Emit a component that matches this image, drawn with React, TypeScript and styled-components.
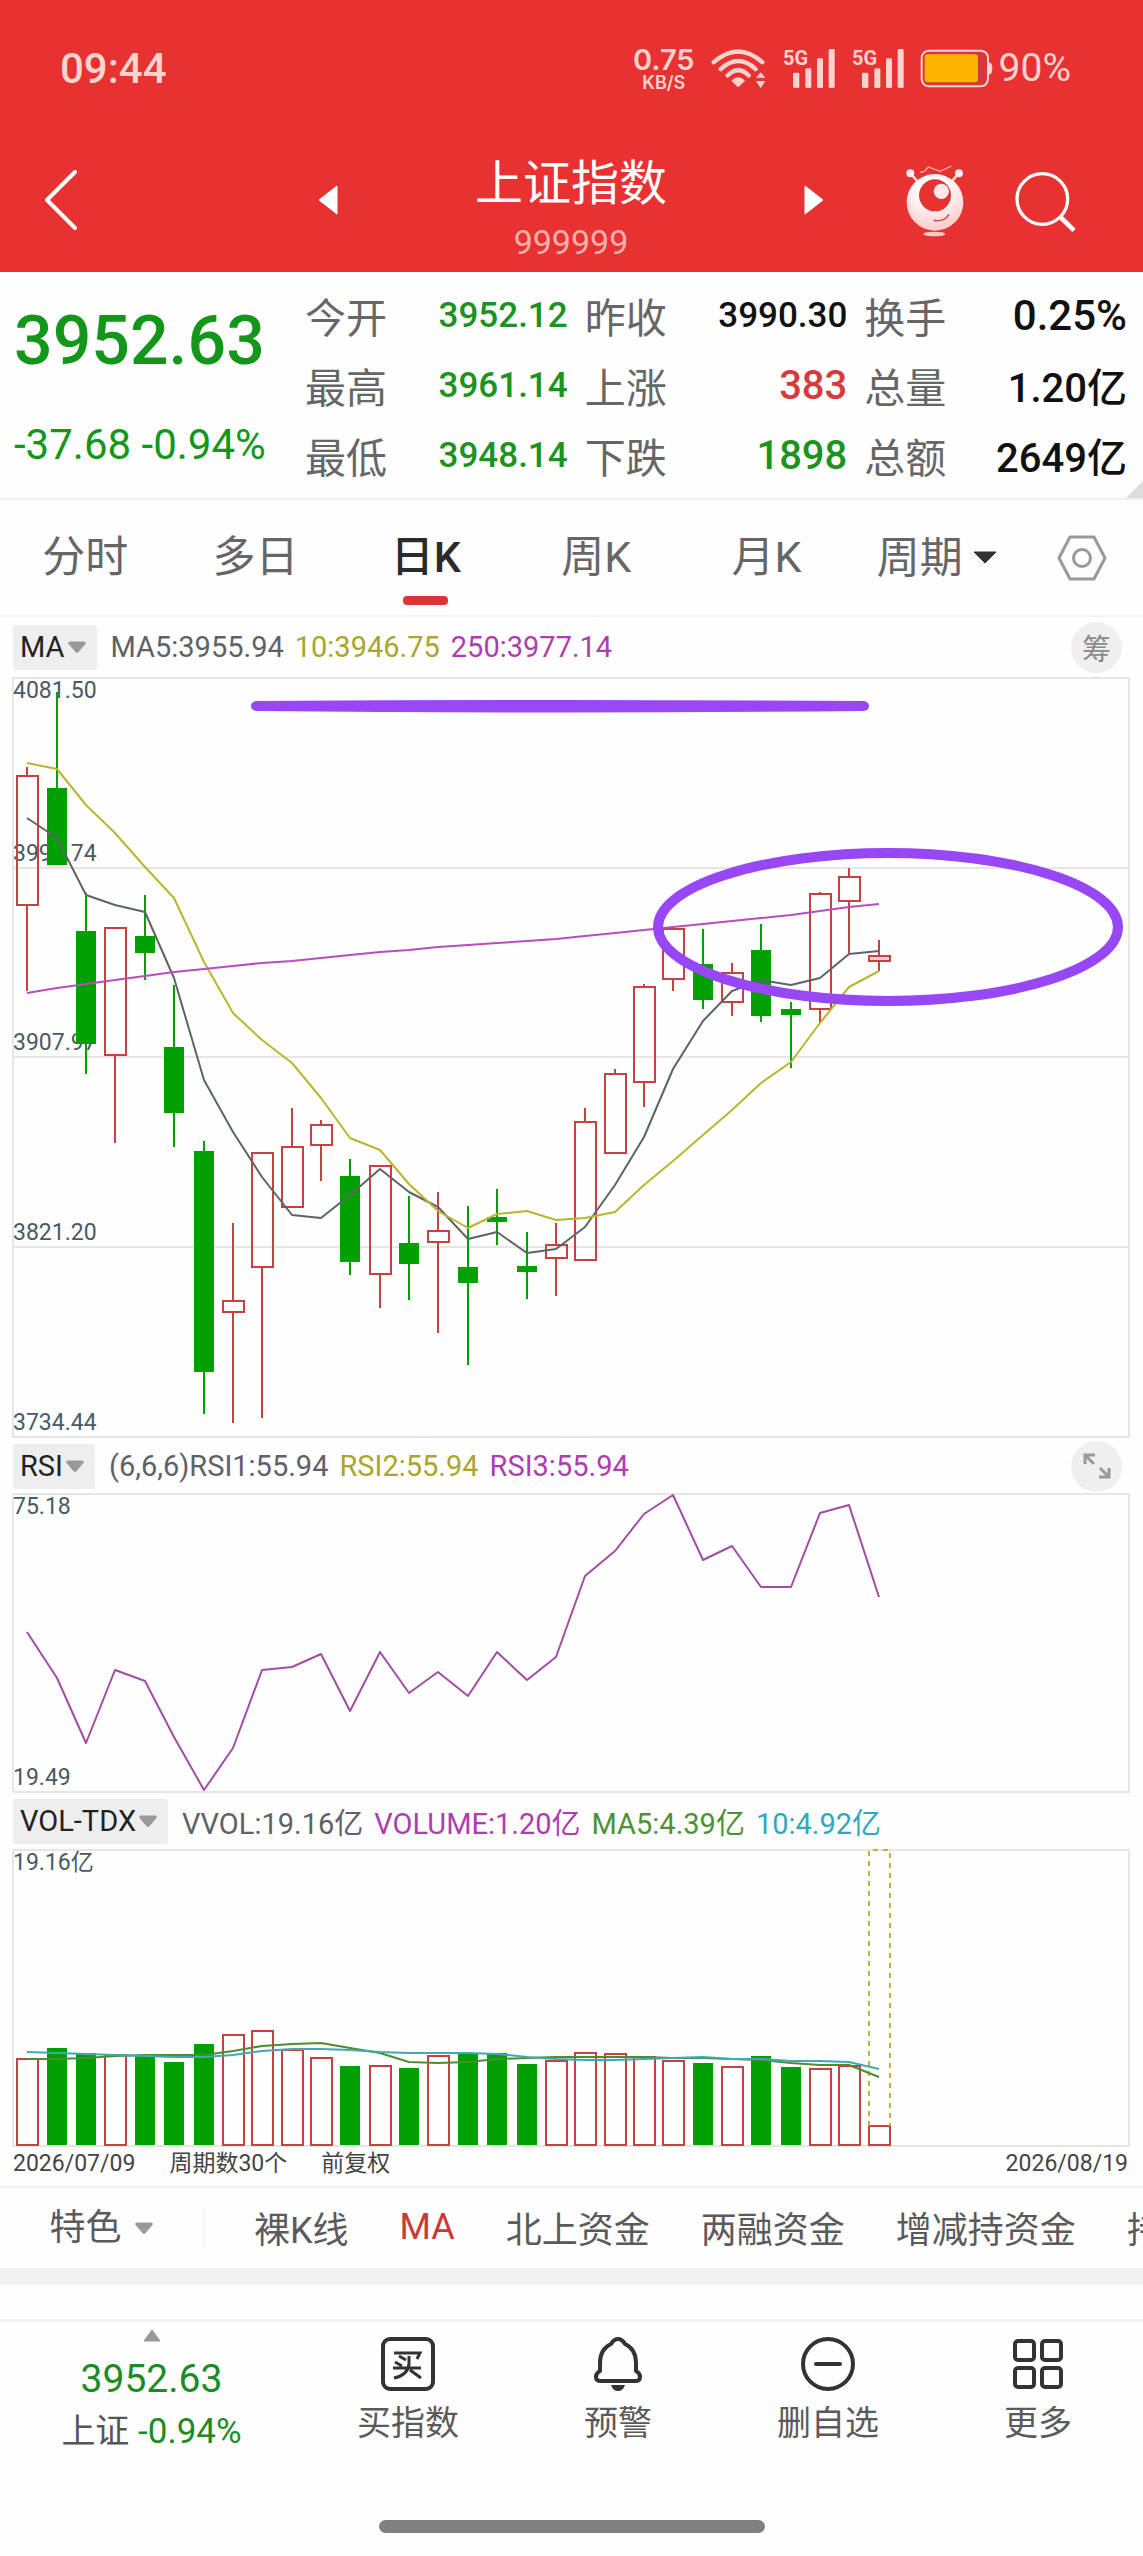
import React from "react";
import styled, { createGlobalStyle } from "styled-components";

const RED = "#e83131";
const UP = "#c64242";
const DOWN = "#00a000";
const FRAME = "#e6e6e6";
const FONT = 'Roboto, "Noto Sans CJK SC", sans-serif';

const GlobalStyle = createGlobalStyle`
  * { box-sizing: border-box; }
  body { margin: 0; background: #fff; font-family: ${FONT}; }
  button, select { font: inherit; color: inherit; background: none; border: 0; padding: 0; margin: 0; }
  button { cursor: pointer; }
  svg { display: block; flex: none; }
`;

const Page = styled.div`
  display: flex;
  flex-direction: column;
  min-height: 100vh;
  background: #fefefe;
  overflow: hidden;
`;

/* ---------- header ---------- */

const Header = styled.header`
  background: ${RED};
  color: #fff;
`;

const StatusBar = styled.div`
  display: flex;
  align-items: center;
  justify-content: space-between;
  height: 136px;
  padding: 0 72px 0 60px;
  color: #fcd3cf;
`;

const Clock = styled.time`
  font-size: 42px;
  font-weight: 500;
`;

const StatusIcons = styled.div`
  display: flex;
  align-items: center;
  gap: 15px;
`;

const Speed = styled.div`
  display: flex;
  flex-direction: column;
  align-items: center;
  font-family: Inter, sans-serif;
  font-weight: 600;
  font-size: 29px;
  line-height: 29px;
  small {
    font-size: 18px;
    line-height: 18px;
  }
`;

const Battery = styled.div`
  display: flex;
  align-items: center;
  gap: 6px;
  font-size: 39px;
`;

const TitleBar = styled.div`
  display: grid;
  grid-template-columns: 1fr 507px 1fr;
  align-items: center;
  height: 136px;
  padding: 0 67px 8px 44px;
`;

const TitleSwitch = styled.div`
  display: flex;
  align-items: center;
  justify-content: space-between;
  margin: 0 -11px 0 11px;
`;

const Title = styled.div`
  text-align: center;
  h1 {
    margin: 0;
    font-size: 48px;
    font-weight: 400;
    line-height: 84px;
  }
  p {
    margin: 0;
    font-size: 34px;
    line-height: 32px;
    color: #f6b0ac;
  }
`;

const TitleActions = styled.div`
  display: flex;
  align-items: center;
  justify-content: flex-end;
  gap: 46px;
`;

/* ---------- quote panel ---------- */

const Quote = styled.section`
  position: relative;
  display: grid;
  grid-template-columns: 274px 1fr;
  column-gap: 17px;
  padding: 8px 16px 8px 14px;
  border-bottom: 2px solid #f0f0f0;
`;

const Corner = styled.svg`
  position: absolute;
  right: 0;
  bottom: 0;
`;

const Last = styled.div`
  color: #14961a;
  white-space: nowrap;
  strong {
    display: block;
    font-size: 68px;
    font-weight: 500;
    line-height: 122px;
  }
  span {
    font-size: 42px;
    line-height: 86px;
  }
`;

const Stats = styled.dl`
  display: grid;
  grid-template-columns: repeat(3, 1fr);
  column-gap: 17px;
  margin: 0;
`;

const Stat = styled.div`
  display: flex;
  align-items: center;
  justify-content: space-between;
  height: 70px;
  dt {
    font-size: 41px;
    color: #666;
  }
`;

const StatValue = styled.dd<{ $color: string; $size: number }>`
  margin: 0;
  font-size: ${(p) => p.$size}px;
  font-weight: 500;
  color: ${(p) => p.$color};
`;

/* ---------- period tabs ---------- */

const Tabs = styled.nav`
  display: grid;
  grid-template-columns: repeat(6, 1fr) 121px;
  height: 117px;
  border-bottom: 2px solid #f2f2f2;
`;

const Tab = styled.button<{ $active?: boolean }>`
  display: flex;
  flex-direction: column;
  align-items: center;
  font-size: 43px;
  line-height: 114px;
  height: 114px;
  color: ${(p) => (p.$active ? "#2b2b2b" : "#666")};
  font-weight: ${(p) => (p.$active ? 500 : 400)};
  &::after {
    content: "";
    width: 45px;
    height: 9px;
    margin-top: -18px;
    flex: none;
    border-radius: 4px;
    background: ${(p) => (p.$active ? "#dc3535" : "transparent")};
  }
`;

const Picker = styled.label<{ $size: number; $gap: number; $color: string }>`
  display: flex;
  align-items: center;
  justify-content: center;
  gap: ${(p) => p.$gap}px;
  font-size: ${(p) => p.$size}px;
  color: ${(p) => p.$color};
  select {
    appearance: none;
    field-sizing: content;
    cursor: pointer;
  }
`;

const IconButton = styled.button<{ $start?: boolean }>`
  display: flex;
  align-items: center;
  justify-content: center;
  justify-self: ${(p) => (p.$start ? "start" : "auto")};
`;

/* ---------- indicator panes ---------- */

const PaneHead = styled.div<{ $height: number }>`
  display: flex;
  align-items: center;
  height: ${(p) => p.$height}px;
  padding: 0 21px 0 13px;
  font-size: 29px;
  white-space: nowrap;
`;

const Chip = styled(Picker)`
  height: 45px;
  padding: 0 10px 0 7px;
  margin-right: 14px;
  border-radius: 3px;
  background: #eee;
`;

const Readings = styled.div`
  display: flex;
  gap: 11px;
  flex: 1;
`;

const Reading = styled.span<{ $color: string }>`
  color: ${(p) => p.$color};
`;

const RoundButton = styled.button`
  display: flex;
  align-items: center;
  justify-content: center;
  width: 51px;
  height: 51px;
  border-radius: 50%;
  background: #efefef;
  color: #8a8a8a;
  font-size: 29px;
`;

const Plot = styled.svg`
  width: 100%;
  height: auto;
  text {
    font-family: ${FONT};
    font-size: 23px;
    fill: #4a5963;
  }
`;

const Dates = styled.div`
  display: flex;
  gap: 34px;
  padding: 0 15px 0 13px;
  height: 39px;
  font-size: 23px;
  line-height: 34px;
  color: #444;
  span:last-child {
    margin-left: auto;
  }
`;

/* ---------- feature strip ---------- */

const Strip = styled.div`
  display: flex;
  align-items: center;
  height: 82px;
  border-top: 2px solid #f2f2f2;
  font-size: 36px;
  color: #5a5a5a;
  white-space: nowrap;
`;

const StripPicker = styled(Picker)`
  flex: none;
  width: 205px;
  height: 40px;
  border-right: 2px solid #f4f4f4;
`;

const StripItems = styled.div`
  display: flex;
  gap: 51px;
  padding: 0 0 2px 49px;
`;

const StripItem = styled.button<{ $active?: boolean }>`
  flex: none;
  color: ${(p) => (p.$active ? "#cf3636" : "inherit")};
`;

const Band = styled.div`
  height: 17px;
  margin-bottom: 34px;
  background: #f3f3f3;
`;

/* ---------- bottom bar ---------- */

const BottomBar = styled.nav`
  display: grid;
  grid-template-columns: 303fr repeat(4, 210fr);
  border-top: 3px solid #f4f4f4;
`;

const IndexButton = styled.button`
  display: flex;
  flex-direction: column;
  align-items: center;
  padding-top: 7px;
  color: #1c8c22;
  font-size: 35px;
  line-height: 44px;
  strong {
    font-size: 39px;
    font-weight: 400;
    line-height: 60px;
    margin-top: 7px;
  }
  em {
    font-style: normal;
    font-size: 34px;
    color: #555;
  }
`;

const BarButton = styled.button`
  display: flex;
  flex-direction: column;
  align-items: center;
  gap: 12px;
  padding-top: 15px;
  font-size: 34px;
  line-height: 40px;
  color: #5a5a5a;
`;

const HomeBar = styled.div`
  width: 386px;
  height: 13px;
  margin: auto auto 23px;
  border-radius: 7px;
  background: #808080;
`;

/* ---------- icons ---------- */

const Triangle = ({ d, w, h, fill }: { d: string; w: number; h: number; fill: string }) => (
  <svg width={w} height={h} viewBox={`0 0 ${w} ${h}`} aria-hidden="true">
    <path d={d} fill={fill} stroke={fill} strokeLinejoin="round" strokeWidth="1" />
  </svg>
);

const Wifi = () => (
  <svg width="57" height="41" viewBox="245 82 170 124" fill="none" stroke="currentColor" aria-hidden="true">
    <g strokeWidth="13" strokeLinecap="round">
      <path d="M255 125Q329 60 402 125" />
      <path d="M276 146Q329 97 382 146" />
      <path d="M297 165Q329 133 361 165" />
    </g>
    <path d="M308 181Q329 160 350 181L329 201Z" fill="currentColor" stroke="none" />
    <path d="M383 172L397 155L411 172ZM383 182L397 204L411 182Z" fill="currentColor" stroke="none" />
  </svg>
);

const Signal = () => (
  <svg width="54" height="52" viewBox="455 66 162 156" fill="currentColor" aria-hidden="true">
    <text x="458" y="134" fontFamily="Roboto, sans-serif" fontWeight="700" fontSize="60">5G</text>
    <rect x="488" y="158" width="19" height="46" rx="4" />
    <rect x="525" y="145" width="18" height="59" rx="4" />
    <rect x="560" y="115" width="18" height="89" rx="4" />
    <rect x="595" y="87" width="18" height="117" rx="4" />
  </svg>
);

const BatteryIcon = () => (
  <svg width="73" height="39" viewBox="874 90 219 117" aria-hidden="true">
    <rect x="879" y="95" width="199" height="107" rx="22" fill="#d63a36" stroke="#fcd3cf" strokeWidth="6" />
    <rect x="888" y="106" width="160" height="84" rx="10" fill="#ffb400" />
    <path d="M1080 130Q1091 130 1091 148Q1091 167 1080 167Z" fill="#fcd3cf" />
  </svg>
);

const Robot = () => (
  <svg width="64" height="75" viewBox="817 425 192 225" aria-hidden="true">
    <defs>
      <radialGradient id="face" cx="0.45" cy="0.25" r="0.8">
        <stop offset="0.3" stopColor="#fff" />
        <stop offset="1" stopColor="#ffc6c4" />
      </radialGradient>
    </defs>
    <path d="M839 456L862 482M984 456L962 482" stroke="#ffe3e1" strokeWidth="7" />
    <circle cx="839" cy="456" r="12" fill="#ffeceb" />
    <circle cx="985" cy="456" r="12" fill="#ffeceb" />
    <path d="M868 453L880 451L893 437L928 450L963 434" fill="none" stroke="#ffb3ae" strokeWidth="4" />
    <circle cx="913" cy="543" r="85" fill="url(#face)" />
    <circle cx="913" cy="522" r="48" fill={RED} />
    <circle cx="932" cy="510" r="23" fill="#ffe9e8" />
    <path d="M909 597Q940 603 955 579" fill="none" stroke="#d2524f" strokeWidth="5" />
    <ellipse cx="911" cy="638" rx="33" ry="7" fill="#ffc9c6" />
  </svg>
);

const Search = () => (
  <svg width="63" height="63" viewBox="1150 440 189 189" fill="none" stroke="#fff" aria-hidden="true">
    <circle cx="1238" cy="530" r="76" strokeWidth="10" />
    <path d="M1292 584L1333 624" strokeWidth="14" />
  </svg>
);

const Hexagon = () => (
  <svg width="50" height="46" viewBox="0 0 50 46" fill="none" stroke="#999" strokeWidth="3" aria-hidden="true">
    <path d="M13 2H37L48 23L37 44H13L2 23Z" strokeLinejoin="round" />
    <circle cx="25" cy="23" r="8.5" />
  </svg>
);

const Expand = () => (
  <svg width="28" height="28" viewBox="0 0 28 28" fill="none" stroke="#999" strokeWidth="3" aria-hidden="true">
    <path d="M2 12V3H12M3 4L11 12" />
    <path d="M26 16V25H16M25 24L17 16" />
  </svg>
);

const BuyIcon = () => (
  <svg width="54" height="54" viewBox="0 0 54 54" fill="none" stroke="#333" aria-hidden="true">
    <rect x="2" y="2" width="50" height="50" rx="7" strokeWidth="4" />
    <path
      d="M13 16H39L36 22M18 19L25 23M14 25L21 29M12 31H40M28 19V27Q27 38 13 41M29 33L40 41"
      strokeWidth="3"
    />
  </svg>
);

const BellIcon = () => (
  <svg width="54" height="54" viewBox="0 0 54 54" fill="none" stroke="#333" strokeWidth="4" aria-hidden="true">
    <path
      d="M27 2Q31 2 34 7Q45 12 45 26V34Q49 36 49 40Q49 44 44 44H10Q5 44 5 40Q5 36 9 34V26Q9 12 20 7Q23 2 27 2Z"
      strokeLinejoin="round"
    />
    <path d="M20 48H34Q32 54 27 54Q22 54 20 48Z" fill="#333" stroke="none" />
  </svg>
);

const MinusIcon = () => (
  <svg width="54" height="54" viewBox="0 0 54 54" fill="none" stroke="#333" strokeWidth="4" aria-hidden="true">
    <circle cx="27" cy="27" r="25" />
    <path d="M15 27H39" strokeLinecap="round" />
  </svg>
);

const GridIcon = () => (
  <svg width="54" height="54" viewBox="0 0 54 54" fill="none" stroke="#333" strokeWidth="4" aria-hidden="true">
    <rect x="4" y="4" width="19" height="19" rx="3" />
    <rect x="31" y="4" width="19" height="19" rx="3" />
    <rect x="4" y="31" width="19" height="19" rx="3" />
    <rect x="31" y="31" width="19" height="19" rx="3" />
  </svg>
);

/* ---------- data, in chart canvas units ---------- */

const LEFT = 13;
const RIGHT = 1129;
const cx = (i: number) => Math.round(27.4 + i * 29.36);

// direction, high, body top, body bottom, low
type Candle = ["u" | "d", number, number, number, number];
const candles: Candle[] = [
  ["u", 767, 776, 905, 991], ["d", 692, 788, 865, 865], ["d", 893, 931, 1044, 1074],
  ["u", 928, 928, 1055, 1143], ["d", 895, 936, 953, 980], ["d", 985, 1047, 1113, 1147],
  ["d", 1141, 1151, 1372, 1414], ["u", 1223, 1301, 1312, 1423], ["u", 1153, 1153, 1267, 1418],
  ["u", 1108, 1147, 1207, 1207], ["u", 1120, 1125, 1145, 1181], ["d", 1159, 1176, 1262, 1275],
  ["u", 1166, 1166, 1274, 1308], ["d", 1196, 1243, 1264, 1300], ["u", 1192, 1231, 1242, 1333],
  ["d", 1206, 1267, 1283, 1365], ["d", 1189, 1217, 1222, 1245], ["d", 1232, 1266, 1272, 1299],
  ["u", 1223, 1245, 1258, 1296], ["u", 1108, 1122, 1260, 1260], ["u", 1069, 1074, 1153, 1153],
  ["u", 984, 987, 1082, 1107], ["u", 926, 929, 979, 991], ["d", 929, 964, 1000, 1009],
  ["u", 963, 973, 1002, 1016], ["d", 924, 950, 1016, 1022], ["d", 1002, 1009, 1015, 1068],
  ["u", 892, 894, 1009, 1023], ["u", 868, 877, 901, 953], ["u", 940, 956, 961, 971],
];
const ma5 = [818, 838, 895, 905, 912, 978, 1080, 1132, 1177, 1215, 1218, 1195, 1169, 1192, 1207, 1239, 1232, 1253, 1249, 1227, 1185, 1137, 1069, 1021, 991, 980, 985, 978, 954, 951];
const ma10 = [763, 769, 805, 833, 867, 898, 962, 1013, 1040, 1063, 1098, 1138, 1150, 1184, 1211, 1228, 1214, 1211, 1220, 1218, 1212, 1185, 1161, 1135, 1110, 1083, 1062, 1023, 987, 971];
const ma250 = [993, 988, 984, 980, 976, 972, 969, 966, 963, 961, 958, 955, 952, 950, 947, 945, 943, 941, 939, 936, 933, 930, 927, 924, 921, 918, 915, 911, 907, 904];
const rsi = [1632, 1678, 1743, 1670, 1681, 1737, 1790, 1748, 1670, 1667, 1654, 1711, 1652, 1693, 1672, 1696, 1652, 1680, 1657, 1576, 1551, 1514, 1495, 1560, 1546, 1587, 1587, 1513, 1505, 1597];
const volumes = [2059, 2048, 2053, 2055, 2055, 2062, 2044, 2035, 2031, 2050, 2058, 2066, 2066, 2068, 2056, 2053, 2053, 2064, 2061, 2053, 2054, 2057, 2061, 2063, 2067, 2056, 2067, 2069, 2066, 2126];
const vol5 = [2059, 2059, 2058, 2056, 2055, 2055, 2055, 2051, 2046, 2044, 2043, 2048, 2053, 2062, 2063, 2062, 2059, 2058, 2057, 2057, 2057, 2057, 2058, 2058, 2059, 2060, 2063, 2065, 2065, 2077];
const vol10 = [2052, 2053, 2054, 2055, 2056, 2057, 2057, 2055, 2051, 2049, 2049, 2050, 2052, 2053, 2053, 2053, 2054, 2057, 2059, 2060, 2060, 2059, 2058, 2057, 2059, 2059, 2061, 2061, 2062, 2069];

const Line = ({ ys, color }: { ys: number[]; color: string }) => (
  <polyline points={ys.map((y, i) => `${cx(i)},${y}`).join(" ")} fill="none" stroke={color} strokeWidth="2" strokeLinejoin="round" />
);

const Box = ({ i, up, top, bottom }: { i: number; up: boolean; top: number; bottom: number }) =>
  up ? (
    <rect
      x={cx(i) - 10}
      y={top}
      width="21"
      height={bottom - top}
      fill={bottom - top < 6 ? "#ffd0cd" : "none"}
      stroke={UP}
      strokeWidth="2"
    />
  ) : (
    <rect x={cx(i) - 10} y={top} width="20" height={bottom - top} fill={DOWN} />
  );

const MainChart = () => (
  <Plot viewBox="0 677 1143 762" role="img" aria-label="日K线图">
    <rect x={LEFT} y="678" width={RIGHT - LEFT} height="759" fill="none" stroke={FRAME} strokeWidth="2" />
    {[868, 1057, 1247].map((y) => (
      <path key={y} d={`M${LEFT} ${y}H${RIGHT}`} stroke={FRAME} strokeWidth="2" />
    ))}
    <text x="13" y="698">4081.50</text>
    <text x="13" y="861">3994.74</text>
    <text x="13" y="1050">3907.97</text>
    <text x="13" y="1240">3821.20</text>
    <text x="13" y="1430">3734.44</text>
    {candles.map(([dir, high, top, bottom, low], i) => (
      <g key={i}>
        <path d={`M${cx(i)} ${high}V${top}M${cx(i)} ${bottom}V${low}`} stroke={dir === "u" ? UP : DOWN} strokeWidth="2" />
        <Box i={i} up={dir === "u"} top={top} bottom={bottom} />
      </g>
    ))}
    <Line ys={ma5} color="#5d6468" />
    <Line ys={ma10} color="#b9b62c" />
    <Line ys={ma250} color="#b94dbb" />
    <path d="M256 701Q560 699 864 701Q869 702 869 706Q869 710 864 711Q560 714 256 711Q251 710 251 706Q251 702 256 701Z" fill="#9747f5" />
    <ellipse cx="888" cy="927" rx="230" ry="74" fill="none" stroke="#9747f5" strokeWidth="10" />
  </Plot>
);

const RsiChart = () => (
  <Plot viewBox="0 1493 1143 300" role="img" aria-label="RSI">
    <rect x={LEFT} y="1494" width={RIGHT - LEFT} height="298" fill="none" stroke={FRAME} strokeWidth="2" />
    <text x="13" y="1514">75.18</text>
    <text x="13" y="1785">19.49</text>
    <Line ys={rsi} color="#a34ca4" />
  </Plot>
);

const VolumeChart = () => (
  <Plot viewBox="0 1849 1143 298" role="img" aria-label="成交量">
    <rect x={LEFT} y="1850" width={RIGHT - LEFT} height="296" fill="none" stroke={FRAME} strokeWidth="2" />
    <text x="13" y="1870">19.16亿</text>
    {volumes.map((top, i) => (
      <Box key={i} i={i} up={candles[i][0] === "u"} top={top} bottom={2145} />
    ))}
    <path d={`M${cx(29) - 10} 2126V1850H${cx(29) + 11}V2126`} fill="none" stroke="#bdb52c" strokeWidth="2" strokeDasharray="5 5" />
    <Line ys={vol5} color="#4d8c2f" />
    <Line ys={vol10} color="#3fa9b5" />
  </Plot>
);

const stats: [string, string, string, number][] = [
  ["今开", "3952.12", "#1c921f", 35],
  ["昨收", "3990.30", "#111", 35],
  ["换手", "0.25%", "#111", 42],
  ["最高", "3961.14", "#1c921f", 35],
  ["上涨", "383", "#d63a3a", 40],
  ["总量", "1.20亿", "#111", 40],
  ["最低", "3948.14", "#1c921f", 35],
  ["下跌", "1898", "#1c921f", 40],
  ["总额", "2649亿", "#111", 40],
];

const GREY_DOWN = "M3 1H17Q19 1 18 3L11 11Q10 12 9 11L2 3Q1 1 3 1Z";

const IndicatorChip = ({ name }: { name: string }) => (
  <Chip $size={29} $gap={2} $color="#222">
    <select aria-label={`${name} 指标`} defaultValue={name}>
      <option>{name}</option>
    </select>
    <Triangle w={20} h={13} d={GREY_DOWN} fill="#999" />
  </Chip>
);

export default function App() {
  return (
    <Page>
      <GlobalStyle />
      <Header>
        <StatusBar>
          <Clock>09:44</Clock>
          <StatusIcons>
            <Speed>
              <span>0.75</span>
              <small>KB/S</small>
            </Speed>
            <Wifi />
            <Signal />
            <Signal />
            <Battery>
              <BatteryIcon />
              90%
            </Battery>
          </StatusIcons>
        </StatusBar>
        <TitleBar>
          <IconButton $start aria-label="返回">
            <svg width="33" height="60" viewBox="0 0 33 60" fill="none" stroke="#fff" strokeWidth="4" aria-hidden="true">
              <path d="M31 2L3 30L31 58" strokeLinejoin="round" strokeLinecap="round" />
            </svg>
          </IconButton>
          <TitleSwitch>
            <IconButton aria-label="上一个">
              <Triangle w={20} h={30} d="M19 1L1 15L19 29Z" fill="#fff" />
            </IconButton>
            <Title>
              <h1>上证指数</h1>
              <p>999999</p>
            </Title>
            <IconButton aria-label="下一个">
              <Triangle w={20} h={30} d="M1 1L19 15L1 29Z" fill="#fff" />
            </IconButton>
          </TitleSwitch>
          <TitleActions>
            <IconButton aria-label="助手">
              <Robot />
            </IconButton>
            <IconButton aria-label="搜索">
              <Search />
            </IconButton>
          </TitleActions>
        </TitleBar>
      </Header>

      <Quote>
        <Last>
          <strong>3952.63</strong>
          <span>-37.68 -0.94%</span>
        </Last>
        <Stats>
          {stats.map(([label, value, color, size]) => (
            <Stat key={label}>
              <dt>{label}</dt>
              <StatValue $color={color} $size={size}>{value}</StatValue>
            </Stat>
          ))}
        </Stats>
        <Corner width="17" height="17" viewBox="0 0 17 17" aria-hidden="true">
          <path d="M17 0V17H0Z" fill="#dcdcdc" />
        </Corner>
      </Quote>

      <Tabs>
        <Tab>分时</Tab>
        <Tab>多日</Tab>
        <Tab $active>日K</Tab>
        <Tab>周K</Tab>
        <Tab>月K</Tab>
        <Picker $size={43} $gap={10} $color="#666">
          <select aria-label="周期">
            <option>周期</option>
          </select>
          <Triangle w={24} h={13} d="M1 1H23L12 12Z" fill="#333" />
        </Picker>
        <IconButton aria-label="设置">
          <Hexagon />
        </IconButton>
      </Tabs>

      <main>
        <PaneHead $height={60}>
          <IndicatorChip name="MA" />
          <Readings>
            <Reading $color="#5d6266">MA5:3955.94</Reading>
            <Reading $color="#aba52b">10:3946.75</Reading>
            <Reading $color="#ae3db0">250:3977.14</Reading>
          </Readings>
          <RoundButton>筹</RoundButton>
        </PaneHead>
        <MainChart />

        <PaneHead $height={54}>
          <IndicatorChip name="RSI" />
          <Readings>
            <Reading $color="#5d6266">(6,6,6)RSI1:55.94</Reading>
            <Reading $color="#aba52b">RSI2:55.94</Reading>
            <Reading $color="#ae3db0">RSI3:55.94</Reading>
          </Readings>
          <RoundButton aria-label="全屏">
            <Expand />
          </RoundButton>
        </PaneHead>
        <RsiChart />

        <PaneHead $height={56}>
          <IndicatorChip name="VOL-TDX" />
          <Readings>
            <Reading $color="#5d6266">VVOL:19.16亿</Reading>
            <Reading $color="#ae3db0">VOLUME:1.20亿</Reading>
            <Reading $color="#4d9133">MA5:4.39亿</Reading>
            <Reading $color="#2fa9ba">10:4.92亿</Reading>
          </Readings>
        </PaneHead>
        <VolumeChart />
        <Dates>
          <span>2026/07/09</span>
          <span>周期数30个</span>
          <span>前复权</span>
          <span>2026/08/19</span>
        </Dates>
      </main>

      <Strip>
        <StripPicker $size={36} $gap={12} $color="#5a5a5a">
          <select aria-label="特色">
            <option>特色</option>
          </select>
          <Triangle w={20} h={13} d={GREY_DOWN} fill="#999" />
        </StripPicker>
        <StripItems>
          <StripItem>裸K线</StripItem>
          <StripItem $active>MA</StripItem>
          <StripItem>北上资金</StripItem>
          <StripItem>两融资金</StripItem>
          <StripItem>增减持资金</StripItem>
          <StripItem>持仓</StripItem>
        </StripItems>
      </Strip>
      <Band />

      <BottomBar>
        <IndexButton>
          <Triangle w={20} h={13} d="M10 1L18 12H2Z" fill="#999" />
          <strong>3952.63</strong>
          <span>
            <em>上证</em> -0.94%
          </span>
        </IndexButton>
        <BarButton>
          <BuyIcon />
          买指数
        </BarButton>
        <BarButton>
          <BellIcon />
          预警
        </BarButton>
        <BarButton>
          <MinusIcon />
          删自选
        </BarButton>
        <BarButton>
          <GridIcon />
          更多
        </BarButton>
      </BottomBar>
      <HomeBar />
    </Page>
  );
}
